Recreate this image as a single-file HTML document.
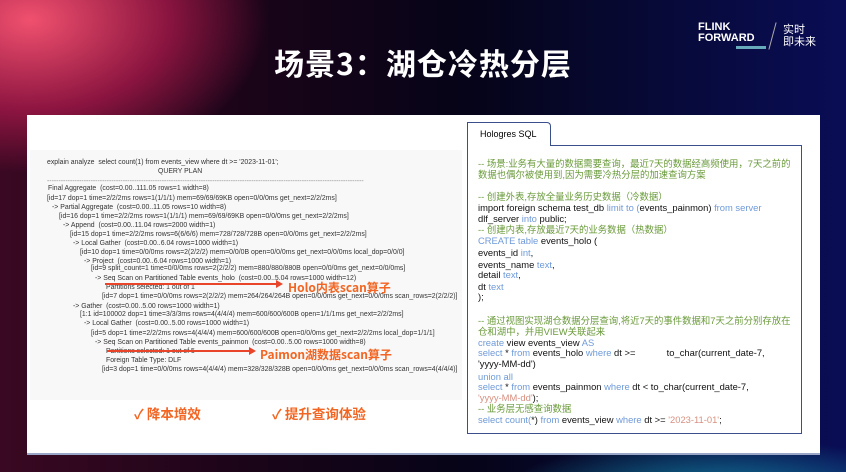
<!DOCTYPE html>
<html><head><meta charset="utf-8"><style>
*{margin:0;padding:0;box-sizing:border-box}
body{width:846px;height:472px;overflow:hidden;position:relative;font-family:"Liberation Sans","Noto Sans CJK SC",sans-serif;
background:
radial-gradient(ellipse 320px 90px at 720px 500px,rgba(20,150,180,.9),transparent 70%),
radial-gradient(ellipse 280px 180px at 30px 20px,rgba(240,80,110,1),rgba(170,25,75,.75) 50%,transparent 85%),
linear-gradient(90deg,#3a0822 0%,#1a0418 30%,#060418 55%,#070a3a 80%,#0a0d55 100%);}
.title{position:absolute;top:40px;left:0;width:846px;text-align:center;color:#fff;font-weight:bold;font-size:30px;font-family:"Noto Sans CJK SC",sans-serif;letter-spacing:1px}
.logo{position:absolute;left:698px;top:22px;color:#fff;font-weight:bold;font-size:11px;line-height:11px}
.logo2{position:absolute;left:783px;top:23px;color:#fff;font-size:11px;line-height:12px;font-family:"Noto Sans CJK SC",sans-serif}
.panel{position:absolute;left:27px;top:115px;width:793px;height:340px;background:#fff;border-bottom:2px solid #9aa6c8}
.plan{position:absolute;left:30px;top:150px;width:432px;height:250px;background:#f8f8f8}
.l{position:absolute;font-size:6.9px;color:#333;white-space:nowrap;line-height:8px}
.or{position:absolute;color:#f26522;font-weight:bold;font-family:"Noto Sans CJK SC",sans-serif;white-space:nowrap}
.arr{position:absolute;height:2px;background:#e8452a}
.tab{position:absolute;left:467px;top:122px;width:84px;height:24px;border:1.5px solid #3b4f8c;border-bottom:none;background:#fff;font-size:9px;padding:6px 0 0 12px;border-radius:0 4px 0 0}
.box{position:absolute;left:467px;top:145px;width:335px;height:289px;border:1.5px solid #3b4f8c}
.s{position:absolute;left:478px;font-size:9.4px;color:#111;white-space:nowrap;line-height:11px;font-family:"Liberation Sans","Noto Sans CJK SC",sans-serif}
.c{color:#6a9a3a}.k{color:#6f9ad8}.q{color:#d89080}
</style></head><body>
<div class="title">场景3：湖仓冷热分层</div>
<div class="logo">FLINK<br>FORWARD<div style="width:30px;height:3px;background:#6ab;margin:2px 0 0 38px"></div></div>
<div class="logo2">实时<br>即未来</div>
<div style="position:absolute;left:772px;top:22px;width:1px;height:28px;background:#aaa;transform:rotate(15deg)"></div>
<div class="panel"></div>
<div class="plan"></div>
<div class="l" style="left:47px;top:159px">explain analyze &nbsp;select count(1) from events_view where dt &gt;= '2023-11-01';</div>
<div class="l" style="left:158px;top:168px">QUERY PLAN</div>
<div class="l" style="left:47px;top:178px;color:#888">------------------------------------------------------------------------------------------------------------------------------------------</div>
<div class="l" style="left:48px;top:185px">Final Aggregate &nbsp;(cost=0.00..111.05 rows=1 width=8)</div>
<div class="l" style="left:47px;top:195px">[id=17 dop=1 time=2/2/2ms rows=1(1/1/1) mem=69/69/69KB open=0/0/0ms get_next=2/2/2ms]</div>
<div class="l" style="left:52px;top:204px">-&gt; Partial Aggregate &nbsp;(cost=0.00..11.05 rows=10 width=8)</div>
<div class="l" style="left:59px;top:213px">[id=16 dop=1 time=2/2/2ms rows=1(1/1/1) mem=69/69/69KB open=0/0/0ms get_next=2/2/2ms]</div>
<div class="l" style="left:63px;top:222px">-&gt; Append &nbsp;(cost=0.00..11.04 rows=2000 width=1)</div>
<div class="l" style="left:70px;top:231px">[id=15 dop=1 time=2/2/2ms rows=6(6/6/6) mem=728/728/728B open=0/0/0ms get_next=2/2/2ms]</div>
<div class="l" style="left:73px;top:240px">-&gt; Local Gather &nbsp;(cost=0.00..6.04 rows=1000 width=1)</div>
<div class="l" style="left:80px;top:249px">[id=10 dop=1 time=0/0/0ms rows=2(2/2/2) mem=0/0/0B open=0/0/0ms get_next=0/0/0ms local_dop=0/0/0]</div>
<div class="l" style="left:84px;top:258px">-&gt; Project &nbsp;(cost=0.00..6.04 rows=1000 width=1)</div>
<div class="l" style="left:91px;top:265px">[id=9 split_count=1 time=0/0/0ms rows=2(2/2/2) mem=880/880/880B open=0/0/0ms get_next=0/0/0ms]</div>
<div class="l" style="left:95px;top:275px">-&gt; Seq Scan on Partitioned Table events_holo &nbsp;(cost=0.00..5.04 rows=1000 width=12)</div>
<div class="l" style="left:106px;top:284px">Partitions selected: 1 out of 1</div>
<div class="l" style="left:102px;top:293px">[id=7 dop=1 time=0/0/0ms rows=2(2/2/2) mem=264/264/264B open=0/0/0ms get_next=0/0/0ms scan_rows=2(2/2/2)]</div>
<div class="l" style="left:73px;top:303px">-&gt; Gather &nbsp;(cost=0.00..5.00 rows=1000 width=1)</div>
<div class="l" style="left:80px;top:311px">[1:1 id=100002 dop=1 time=3/3/3ms rows=4(4/4/4) mem=600/600/600B open=1/1/1ms get_next=2/2/2ms]</div>
<div class="l" style="left:84px;top:320px">-&gt; Local Gather &nbsp;(cost=0.00..5.00 rows=1000 width=1)</div>
<div class="l" style="left:91px;top:330px">[id=5 dop=1 time=2/2/2ms rows=4(4/4/4) mem=600/600/600B open=0/0/0ms get_next=2/2/2ms local_dop=1/1/1]</div>
<div class="l" style="left:95px;top:339px">-&gt; Seq Scan on Partitioned Table events_painmon &nbsp;(cost=0.00..5.00 rows=1000 width=8)</div>
<div class="l" style="left:106px;top:348px">Partitions selected: 1 out of 5</div>
<div class="l" style="left:106px;top:357px">Foreign Table Type: DLF</div>
<div class="l" style="left:102px;top:366px">[id=3 dop=1 time=0/0/0ms rows=4(4/4/4) mem=328/328/328B open=0/0/0ms get_next=0/0/0ms scan_rows=4(4/4/4)]</div>
<div class="arr" style="left:105px;top:283px;width:172px"></div>
<div style="position:absolute;left:276px;top:280px;border-left:7px solid #e8452a;border-top:4px solid transparent;border-bottom:4px solid transparent"></div>
<div class="or" style="left:288px;top:279px;font-size:12px">Holo内表scan算子</div>
<div class="arr" style="left:107px;top:350px;width:143px"></div>
<div style="position:absolute;left:249px;top:347px;border-left:7px solid #e8452a;border-top:4px solid transparent;border-bottom:4px solid transparent"></div>
<div class="or" style="left:260px;top:346px;font-size:12px">Paimon湖数据scan算子</div>
<div class="or" style="left:134px;top:403px;font-size:13.5px">✓ 降本增效</div>
<div class="or" style="left:272px;top:403px;font-size:13.5px">✓ 提升查询体验</div>
<div class="box"></div>
<div class="tab">Hologres SQL</div>
<div class="s c" style="top:158px">-- 场景:业务有大量的数据需要查询，最近7天的数据经高频使用，7天之前的</div>
<div class="s c" style="top:169px">数据也偶尔被使用到,因为需要冷热分层的加速查询方案</div>
<div class="s c" style="top:191px">-- 创建外表,存放全量业务历史数据（冷数据）</div>
<div class="s" style="top:202px">import foreign schema test_db <span class="k">limit to (</span>events_painmon) <span class="k">from server</span></div>
<div class="s" style="top:213px">dlf_server <span class="k">into</span> public;</div>
<div class="s c" style="top:224px">-- 创建内表,存放最近7天的业务数据（热数据）</div>
<div class="s" style="top:235px"><span class="k">CREATE table</span> events_holo (</div>
<div class="s" style="top:247px">events_id <span class="k">int</span>,</div>
<div class="s" style="top:259px">events_name <span class="k">text</span>,</div>
<div class="s" style="top:269px">detail <span class="k">text</span>,</div>
<div class="s" style="top:281px">dt <span class="k">text</span></div>
<div class="s" style="top:291px">);</div>
<div class="s c" style="top:315px">-- 通过视图实现湖仓数据分层查询,将近7天的事件数据和7天之前分别存放在</div>
<div class="s c" style="top:326px">仓和湖中，并用VIEW关联起来</div>
<div class="s" style="top:337px"><span class="k">create</span> view events_view <span class="k">AS</span></div>
<div class="s" style="top:347px"><span class="k">select</span> * <span class="k">from</span> events_holo <span class="k">where</span> dt &gt;= &nbsp;&nbsp;&nbsp;&nbsp;&nbsp;&nbsp;&nbsp;&nbsp;&nbsp;&nbsp;&nbsp;to_char(current_date-7,</div>
<div class="s" style="top:358px">'yyyy-MM-dd')</div>
<div class="s k" style="top:371px">union all</div>
<div class="s" style="top:381px"><span class="k">select</span> * <span class="k">from</span> events_painmon <span class="k">where</span> dt &lt; to_char(current_date-7,</div>
<div class="s" style="top:392px"><span class="q">'yyyy-MM-dd'</span>);</div>
<div class="s c" style="top:403px">-- 业务层无感查询数据</div>
<div class="s" style="top:414px"><span class="k">select count(</span>*) <span class="k">from</span> events_view <span class="k">where</span> dt &gt;= <span class="q">'2023-11-01'</span>;</div>
</body></html>
